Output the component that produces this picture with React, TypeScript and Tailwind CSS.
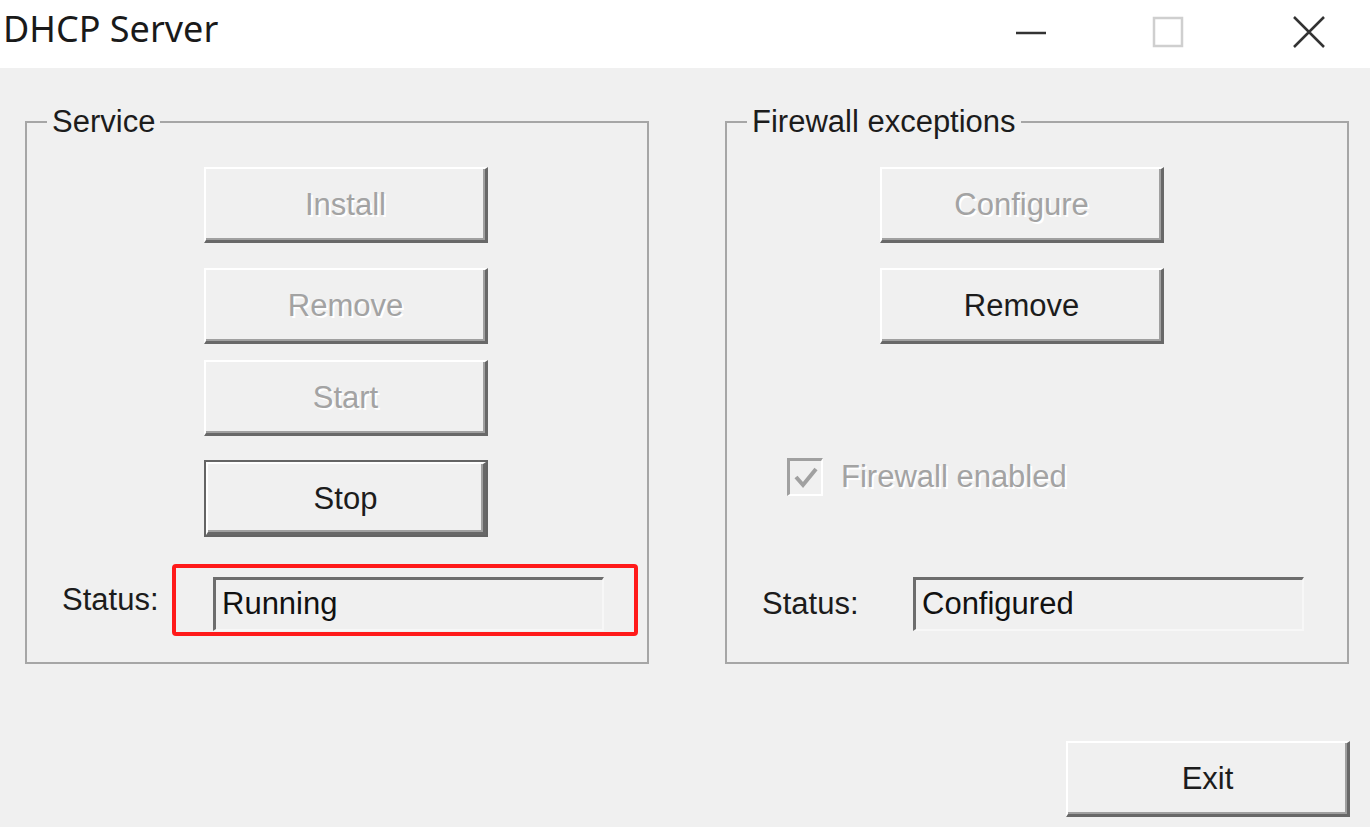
import React from 'react';

const dlgFont = { fontFamily: '"Liberation Sans", Arial, sans-serif' };

type BtnProps = { label: string; disabled?: boolean; isDefault?: boolean };

const WinButton: React.FC<BtnProps> = ({ label, disabled, isDefault }) => {
  const inner = (
    <div
      className={`flex h-full w-full items-center justify-center border-t-2 border-l-2 border-white border-r-[3px] border-b-[3px] border-r-[#686868] border-b-[#686868] bg-[#f0f0f0] pt-[2px] text-[31px] shadow-[inset_-2px_-2px_0_#a0a0a0] ${
        disabled ? 'text-[#a3a3a3] [text-shadow:2px_2px_0_#ffffff]' : 'text-[#1c1c1c]'
      }`}
    >
      {label}
    </div>
  );

  if (isDefault) {
    return <div className="h-[77px] w-[284px] border-2 border-[#646464]">{inner}</div>;
  }
  return <div className="h-[76px] w-[284px]">{inner}</div>;
};

const StatusField: React.FC<{ value: string }> = ({ value }) => (
  <div className="flex h-[54px] w-[391px] items-center border-t-[3px] border-l-[3px] border-[#6d6d6d] border-b-2 border-r-2 border-b-[#f7f7f7] border-r-[#f7f7f7] bg-[#f0f0f0] pl-[6px] text-[31px] text-[#111]">
    {value}
  </div>
);

const GroupBox: React.FC<{ title: string; children: React.ReactNode }> = ({ title, children }) => (
  <fieldset className="h-[560px] w-[624px] border-2 border-[#a6a6a6]">
    <legend className="ml-[20px] px-[5px] text-[31px] leading-[36px] text-[#1c1c1c]">{title}</legend>
    {children}
  </fieldset>
);

export default function App() {
  return (
    <div className="flex h-[827px] w-[1370px] flex-col bg-[#f0f0f0]" style={dlgFont}>
      {/* title bar */}
      <div className="flex h-[68px] items-start bg-white">
        <div
          className="pl-[3px] pt-[9px] text-[36px] leading-[40px] text-[#1a1a1a]"
          style={{ fontFamily: '"Noto Sans", "Open Sans", sans-serif' }}
        >
          DHCP Server
        </div>
        <div className="ml-auto flex h-full items-center pr-[44px]">
          <svg width="32" height="32" viewBox="0 0 32 32" className="mt-[-4px]">
            <line x1="1" y1="17" x2="31" y2="17" stroke="#333" strokeWidth="2.5" />
          </svg>
          <svg width="32" height="32" viewBox="0 0 32 32" className="ml-[105px] mt-[-4px]">
            <rect x="2" y="2" width="28" height="28" fill="none" stroke="#cfcfcf" strokeWidth="2.5" />
          </svg>
          <svg width="34" height="34" viewBox="0 0 34 34" className="ml-[108px] mt-[-4px]">
            <path d="M2 2 L32 32 M32 2 L2 32" stroke="#333" strokeWidth="2.5" />
          </svg>
        </div>
      </div>

      {/* body */}
      <div className="flex flex-1 flex-col pl-[25px] pt-[36px]">
        <div className="flex gap-[76px]">
          <GroupBox title="Service">
            <div className="flex flex-col pl-[177px] pt-[27px]">
              <WinButton label="Install" disabled />
              <div className="mt-[25px]">
                <WinButton label="Remove" disabled />
              </div>
              <div className="mt-[16px]">
                <WinButton label="Start" disabled />
              </div>
              <div className="mt-[24px]">
                <WinButton label="Stop" isDefault />
              </div>
            </div>
            <div className="mt-[27px] flex items-center pl-[35px]">
              <div className="w-[110px] text-[31px] text-[#1c1c1c]">Status:</div>
              <div className="rounded-[4px] border-4 border-[#ff1a1a] pb-[1px] pl-[37px] pr-[30px] pt-[9px]">
                <StatusField value="Running" />
              </div>
            </div>
          </GroupBox>

          <GroupBox title="Firewall exceptions">
            <div className="flex flex-col pl-[153px] pt-[27px]">
              <WinButton label="Configure" disabled />
              <div className="mt-[25px]">
                <WinButton label="Remove" />
              </div>
            </div>
            <div className="mt-[114px] flex h-[38px] items-center pl-[60px]">
              <div className="flex h-[38px] w-[36px] items-center justify-center border-t-[3px] border-l-[3px] border-[#a0a0a0] border-b-2 border-r-2 border-b-white border-r-white bg-[#f0f0f0]">
                <svg width="26" height="26" viewBox="0 0 26 26">
                  <path d="M3 12 L10 20 L23 4" fill="none" stroke="#a0a0a0" strokeWidth="4" />
                </svg>
              </div>
              <span className="ml-[18px] text-[31px] text-[#a3a3a3] [text-shadow:2px_2px_0_#ffffff]">
                Firewall enabled
              </span>
            </div>
            <div className="mt-[81px] flex items-center pl-[35px]">
              <div className="w-[151px] text-[31px] text-[#1c1c1c]">Status:</div>
              <StatusField value="Configured" />
            </div>
          </GroupBox>
        </div>

        <div className="mt-[77px] flex justify-end pr-[20px]">
          <WinButton label="Exit" />
        </div>
      </div>
    </div>
  );
}
